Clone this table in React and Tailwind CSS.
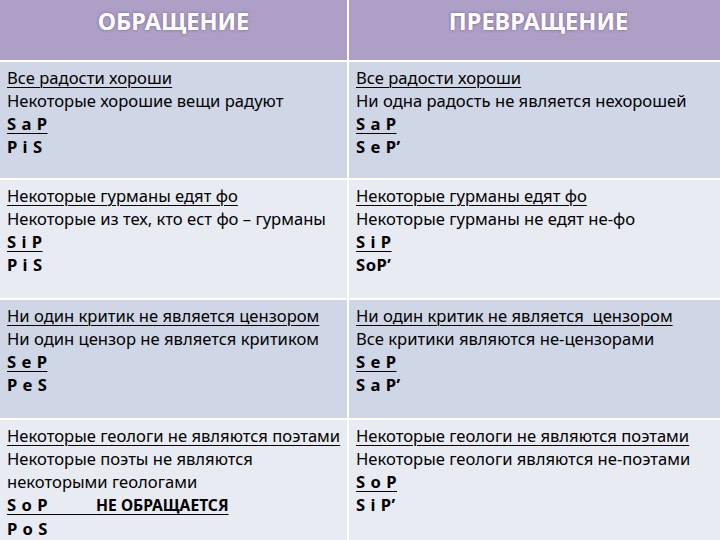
export default function App() {
  const font = { fontFamily: '"Noto Sans", "Open Sans", sans-serif' };
  const Cell = ({ bg, children }) => (
    <div className={`${bg} pl-[7px] pt-[4px] text-[16.6px] leading-[23px] text-black`}>{children}</div>
  );
  const U = ({ children }) => <div className="underline underline-offset-[3px] decoration-1 whitespace-pre">{children}</div>;
  const B = ({ children, u }) => (
    <div className={`font-bold whitespace-pre tracking-[0.5px] ${u ? 'underline underline-offset-[3px] decoration-1' : ''}`}>{children}</div>
  );
  const d = 'bg-[#cfd6e5]';
  const l = 'bg-[#e8ebf2]';
  const H = 'bg-[#ad9fc6] flex justify-center pt-[4px] text-[23.5px] font-bold text-white [text-shadow:0_0_3px_rgba(80,60,110,0.6)]';
  return (
    <div className="w-[720px] h-[540px] overflow-hidden bg-white" style={font}>
      <div className="grid grid-cols-[347px_371px] grid-rows-[60px_116px_118px_118px_120px] gap-[2px]">
        <div className={H}>ОБРАЩЕНИЕ</div>
        <div className={`${H} pl-[8px]`}>ПРЕВРАЩЕНИЕ</div>

        <Cell bg={d}>
          <U>Все радости хороши</U>
          <div>Некоторые хорошие вещи радуют</div>
          <B u>S a P</B>
          <B>P i S</B>
        </Cell>
        <Cell bg={d}>
          <U>Все радости хороши</U>
          <div>Ни одна радость не является нехорошей</div>
          <B u>S a P</B>
          <B>S e P’</B>
        </Cell>

        <Cell bg={l}>
          <U>Некоторые гурманы едят фо</U>
          <div>Некоторые из тех, кто ест фо – гурманы</div>
          <B u>S i P</B>
          <B>P i S</B>
        </Cell>
        <Cell bg={l}>
          <U>Некоторые гурманы едят фо</U>
          <div>Некоторые гурманы не едят не-фо</div>
          <B u>S i P</B>
          <B>SoP’</B>
        </Cell>

        <Cell bg={d}>
          <U>Ни один критик не является цензором</U>
          <div>Ни один цензор не является критиком</div>
          <B u>S e P</B>
          <B>P e S</B>
        </Cell>
        <Cell bg={d}>
          <U>Ни один критик не является  цензором</U>
          <div>Все критики являются не-цензорами</div>
          <B u>S e P</B>
          <B>S a P’</B>
        </Cell>

        <Cell bg={l}>
          <U>Некоторые геологи не являются поэтами</U>
          <div>Некоторые поэты не являются</div>
          <div>некоторыми геологами</div>
          <div className="font-bold whitespace-pre underline underline-offset-[3px] decoration-1">
            <span className="tracking-[0.5px]">{'S o P          '}</span>
            <span className="text-[15.6px] tracking-[0px]">НЕ ОБРАЩАЕТСЯ</span>
          </div>
          <B>P o S</B>
        </Cell>
        <Cell bg={l}>
          <U>Некоторые геологи не являются поэтами</U>
          <div>Некоторые геологи являются не-поэтами</div>
          <B u>S o P</B>
          <B>S i P’</B>
        </Cell>
      </div>
    </div>
  );
}
